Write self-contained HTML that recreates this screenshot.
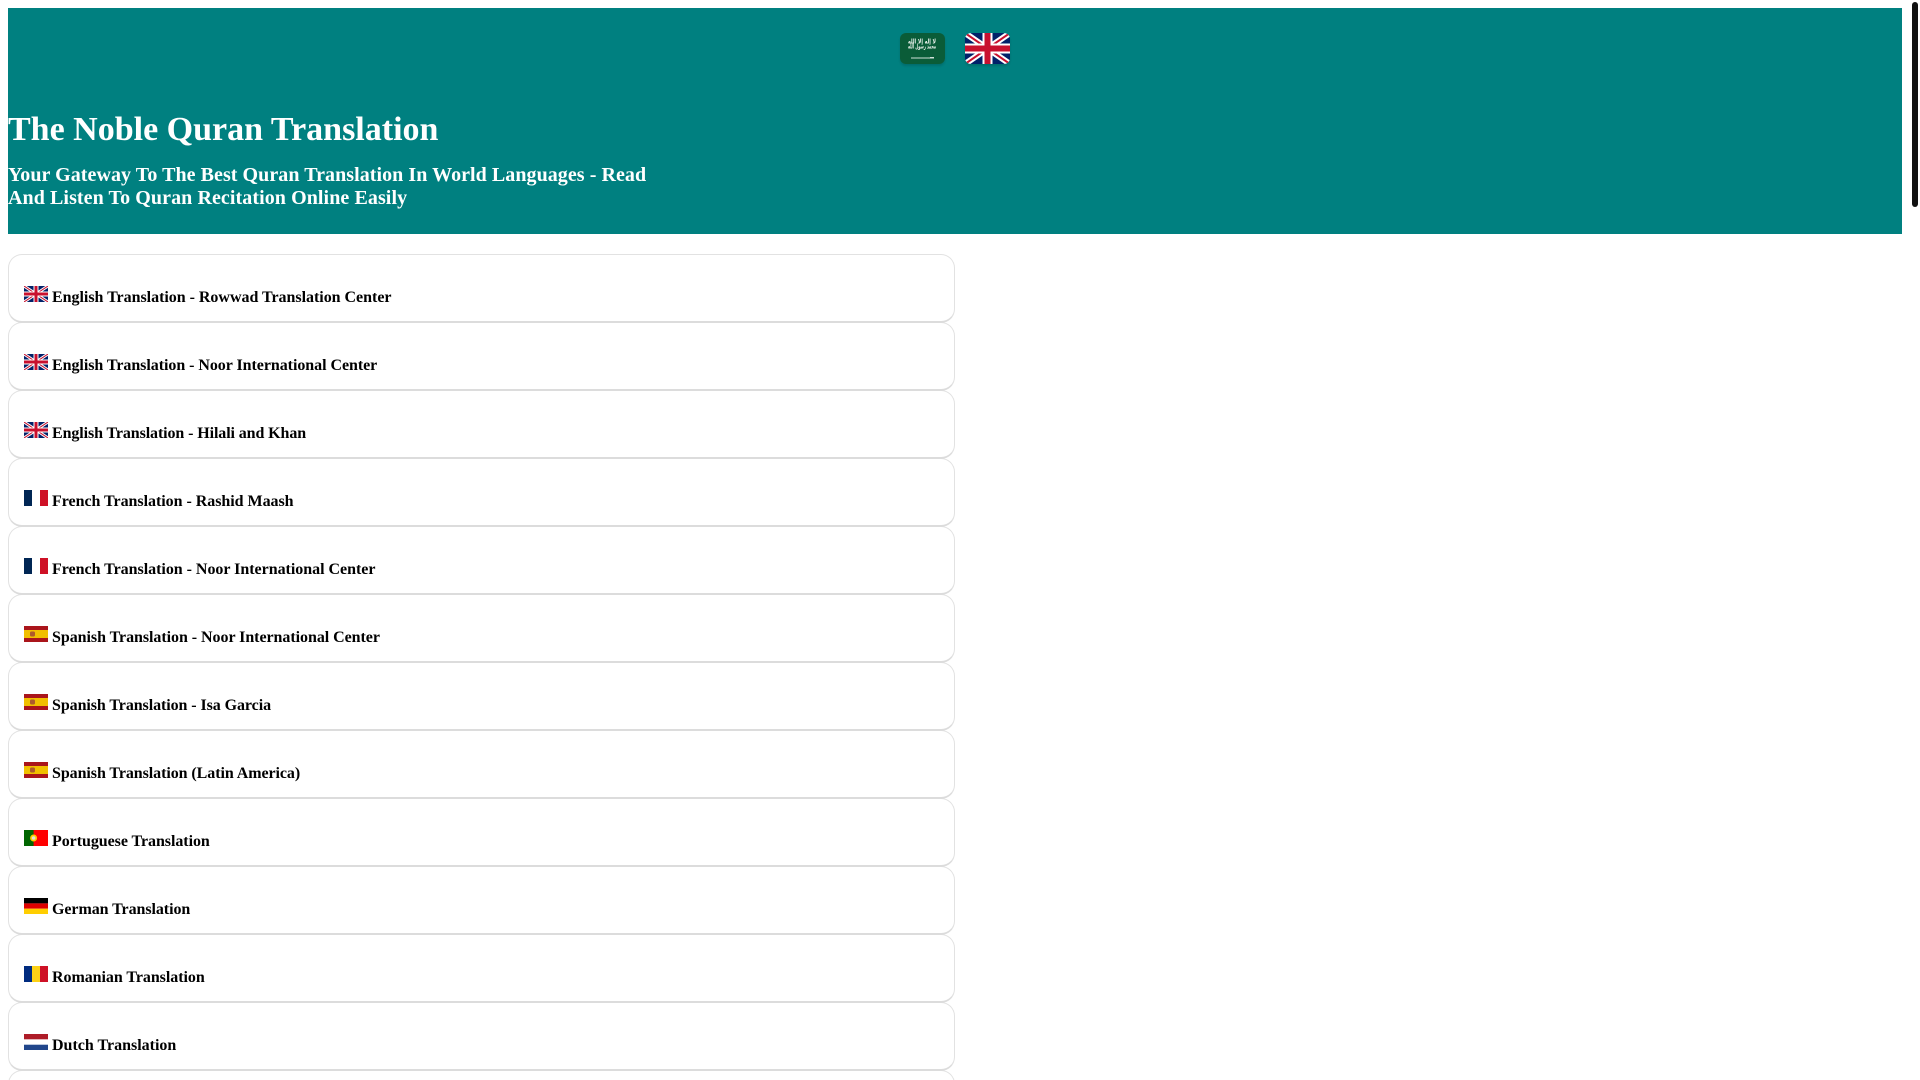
<!DOCTYPE html>
<html lang="en"><head><meta charset="utf-8"><title>The Noble Quran Translation</title>
<style>
html,body{margin:0;padding:0;background:#fff;overflow:hidden;height:1080px;width:1920px}
body{font-family:"Times New Roman","Liberation Serif",serif;position:relative}
#hdr{position:absolute;left:8px;top:8px;width:1894px;height:226px;background:#008080;color:#fff}
#hdr h1{position:absolute;left:0;top:102px;margin:0;font-size:34px;line-height:40px;font-weight:bold;white-space:nowrap}
#hdr h2{position:absolute;left:0;top:155.500px;margin:0;font-size:20px;line-height:23px;font-weight:bold;white-space:nowrap}
.top{position:absolute;top:25px;width:45px;height:31px;border-radius:6px;overflow:hidden;box-shadow:0 2px 2px rgba(0,0,0,.15)}
.top svg{display:block}
.c{position:absolute;left:8px;width:945px;border:1px solid #e2e2e2;border-bottom:2px solid #dcdcdc;height:66px;border-radius:14px;background:#fff;box-sizing:content-box}
.c svg{position:absolute;left:15px;top:31px}
.c b{position:absolute;left:43px;top:33px;font-size:16px;line-height:20px;color:#000;white-space:nowrap}
#sb{position:absolute;left:1912px;top:2px;width:6px;height:205px;background:#111;border-radius:3px}
</style></head><body>
<div id="hdr">
<div class="top" style="left:892px"><svg width="45" height="31" viewBox="0 0 45 31"><rect width="45" height="31" fill="#0a5c38"/><text x="8" y="10.500" font-size="6.500" font-weight="bold" fill="#e8f0ea" textLength="28" lengthAdjust="spacingAndGlyphs" font-family="DejaVu Sans,sans-serif">لا إله إلا الله</text><text x="8" y="15.500" font-size="6.500" font-weight="bold" fill="#e8f0ea" textLength="28" lengthAdjust="spacingAndGlyphs" font-family="DejaVu Sans,sans-serif">محمد رسول الله</text><path d="M11 25h20" stroke="#cfe0d6" stroke-width="1"/><path d="M30 24h4v1.500h-4z" fill="#cfe0d6"/></svg></div>
<div class="top" style="left:957px"><svg width="45" height="31" viewBox="0 0 45 31"><rect width="45" height="31" fill="#012169"/><path d="M0 0L45 31M45 0L0 31" stroke="#fff" stroke-width="6"/><path d="M0 0L45 31M45 0L0 31" stroke="#c8102e" stroke-width="2"/><path d="M22.500 0V31M0 15.500H45" stroke="#fff" stroke-width="10"/><path d="M22.500 0V31M0 15.500H45" stroke="#c8102e" stroke-width="6"/></svg></div>
<h1>The Noble Quran Translation</h1>
<h2><span style="letter-spacing:.055px">Your Gateway To The Best Quran Translation In World Languages - Read</span><br><span style="letter-spacing:.08px">And Listen To Quran Recitation Online Easily</span></h2>
</div>

<div class="c" style="top:254px;z-index:13"><svg width="24" height="16"><use href="#uk"/></svg><b style="letter-spacing:-.025px">English Translation - Rowwad Translation Center</b></div>
<div class="c" style="top:322px;z-index:12"><svg width="24" height="16"><use href="#uk"/></svg><b style="letter-spacing:-.05px">English Translation - Noor International Center</b></div>
<div class="c" style="top:390px;z-index:11"><svg width="24" height="16"><use href="#uk"/></svg><b style="letter-spacing:-.1px">English Translation - Hilali and Khan</b></div>
<div class="c" style="top:458px;z-index:10"><svg width="24" height="16"><use href="#fr"/></svg><b style="letter-spacing:-.035px">French Translation - Rashid Maash</b></div>
<div class="c" style="top:526px;z-index:9"><svg width="24" height="16"><use href="#fr"/></svg><b style="letter-spacing:-.025px">French Translation - Noor International Center</b></div>
<div class="c" style="top:594px;z-index:8"><svg width="24" height="16"><use href="#es"/></svg><b style="letter-spacing:-.05px">Spanish Translation - Noor International Center</b></div>
<div class="c" style="top:662px;z-index:7"><svg width="24" height="16"><use href="#es"/></svg><b style="letter-spacing:-.075px">Spanish Translation - Isa Garcia</b></div>
<div class="c" style="top:730px;z-index:6"><svg width="24" height="16"><use href="#es"/></svg><b style="letter-spacing:-.07px">Spanish Translation (Latin America)</b></div>
<div class="c" style="top:798px;z-index:5"><svg width="24" height="16"><use href="#pt"/></svg><b style="letter-spacing:-.055px">Portuguese Translation</b></div>
<div class="c" style="top:866px;z-index:4"><svg width="24" height="16"><use href="#de"/></svg><b style="letter-spacing:-.067px">German Translation</b></div>
<div class="c" style="top:934px;z-index:3"><svg width="24" height="16"><use href="#ro"/></svg><b style="letter-spacing:-.05px">Romanian Translation</b></div>
<div class="c" style="top:1002px;z-index:2"><svg width="24" height="16"><use href="#nl"/></svg><b>Dutch Translation</b></div>
<div class="c" style="top:1070px;z-index:1;height:30px"></div>
<div id="sb"></div>

<svg width="0" height="0" style="position:absolute"><defs>
<g id="uk"><rect width="24" height="16" fill="#012169"/><path d="M0 0L24 16M24 0L0 16" stroke="#fff" stroke-width="3"/><path d="M0 0L24 16M24 0L0 16" stroke="#c8102e" stroke-width="1"/><path d="M12 0V16M0 8H24" stroke="#fff" stroke-width="5"/><path d="M12 0V16M0 8H24" stroke="#c8102e" stroke-width="3"/></g>
<g id="fr"><rect width="8" height="16" fill="#002654"/><rect x="8" width="8" height="16" fill="#fff"/><rect x="16" width="8" height="16" fill="#ce1126"/></g>
<g id="es"><rect width="24" height="16" fill="#aa151b"/><rect y="4" width="24" height="8" fill="#f1bf00"/><rect x="6" y="5.500" width="5" height="5" rx="1.500" fill="#ad5a2c"/></g>
<g id="pt"><rect width="24" height="16" fill="#ff0000"/><rect width="9.600" height="16" fill="#006600"/><circle cx="9.600" cy="8" r="3.500" fill="#ffcc00"/><circle cx="9.600" cy="8" r="1.800" fill="#e0e0e0"/></g>
<g id="de"><rect width="24" height="5.400" fill="#000"/><rect y="5.400" width="24" height="5.300" fill="#dd0000"/><rect y="10.700" width="24" height="5.300" fill="#ffce00"/></g>
<g id="ro"><rect width="8" height="16" fill="#002b7f"/><rect x="8" width="8" height="16" fill="#fcd116"/><rect x="16" width="8" height="16" fill="#ce1126"/></g>
<g id="nl"><rect width="24" height="5.400" fill="#ae1c28"/><rect y="5.400" width="24" height="5.300" fill="#fff"/><rect y="10.700" width="24" height="5.300" fill="#21468b"/></g>
</defs></svg>
</body></html>
